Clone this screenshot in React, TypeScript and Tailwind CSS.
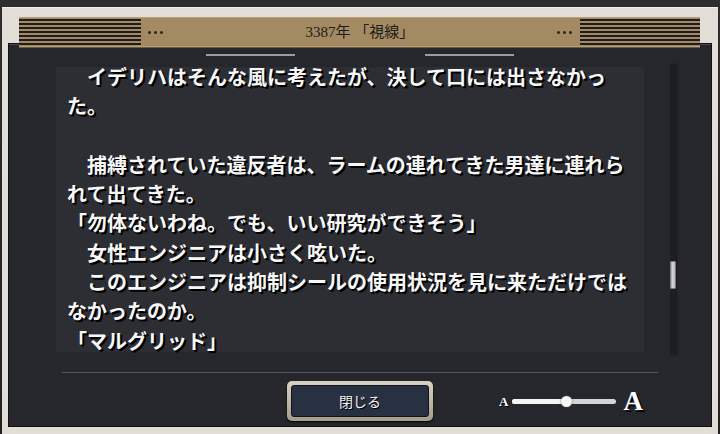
import React from 'react';

const bodyLines = [
  '　イデリハはそんな風に考えたが、決して口には出さなかっ',
  'た。',
  '',
  '　捕縛されていた違反者は、ラームの連れてきた男達に連れら',
  'れて出てきた。',
  '「勿体ないわね。でも、いい研究ができそう」',
  '　女性エンジニアは小さく呟いた。',
  '　このエンジニアは抑制シールの使用状況を見に来ただけでは',
  'なかったのか。',
  '「マルグリッド」',
];

const Dots = () => (
  <div className="flex items-center gap-[3px]">
    <span className="w-[3px] h-[3px] rounded-full bg-[#2a2620]" />
    <span className="w-[3px] h-[3px] rounded-full bg-[#2a2620]" />
    <span className="w-[3px] h-[3px] rounded-full bg-[#2a2620]" />
  </div>
);

const Stripes = ({ w }: { w: string }) => (
  <div
    className={`${w} h-full bg-[repeating-linear-gradient(to_bottom,#a38a62_0_1px,#1d1d21_1px_3px,#a38a62_3px_4px)]`}
  />
);

export default function App() {
  return (
    <div className="w-[720px] h-[434px] bg-[linear-gradient(to_bottom,#2e2e31,#222225)] px-[2px] pt-[7px] overflow-hidden">
      <div className="h-[427px] bg-[#e3ddd7] border-t border-[#f3efea] flex flex-col pt-[9px] px-[6px]">
        {/* header band */}
        <div className="relative z-10 mx-[11px] mr-[12px] h-[30px] bg-[#a38a62] border-y border-[#b89f74] flex items-center shadow-[0_1px_0_#6b5a3e]">
          <Stripes w="w-[122px]" />
          <div className="ml-[7px]">
            <Dots />
          </div>
          <div className="flex-1 text-center text-[15px] leading-none text-[#1e1c19] font-['Liberation_Serif','Noto_Sans_CJK_JP',serif]">
            3387年 「視線」
          </div>
          <div className="mr-[8px]">
            <Dots />
          </div>
          <Stripes w="w-[120px]" />
        </div>

        {/* dark panel */}
        <div className="-mt-[4px] h-[384px] bg-[#26272c] border border-[#111114] shadow-[inset_0_1px_0_#4a4a4e] flex flex-col">
          <div className="mt-[10px] flex justify-center gap-[130px]">
            <div className="w-[89px] h-[2px] bg-[#9c9c9e]" />
            <div className="w-[89px] h-[2px] bg-[#9c9c9e]" />
          </div>

          <div className="mt-[8px] h-[291px] flex pl-[47px]">
            <div className="mt-[3px] w-[588px] h-[285px] bg-[#2d2e33] pl-[11px]">
              <div className="-mt-[5px] text-[20px] leading-[29.3px] font-bold text-[#f7f7f7] whitespace-nowrap font-['Noto_Sans_CJK_JP',sans-serif] [text-shadow:2px_2px_0_#000,1px_1px_1px_#000]">
                {bodyLines.map((l, i) => (
                  <div key={i} className="h-[29.3px]">
                    {l}
                  </div>
                ))}
              </div>
            </div>
            <div className="ml-[26px] w-[6px] h-[291px] bg-[#1d1e22] shadow-[1px_0_2px_#18181b] flex flex-col">
              <div className="mt-[197px] h-[28px] w-[6px] rounded-[1px] bg-[linear-gradient(to_right,#9a9a9c,#d6d6d8_40%,#b8b8ba)] border border-[#7c7c80]" />
            </div>
          </div>

          <div className="mt-[17px] ml-[53px] w-[596px] h-[1px] bg-[#55565b]" />

          <div className="mt-[8px] flex items-center pl-[278px]">
            <div className="w-[146px] h-[40px] rounded-[5px] p-[4px] bg-[linear-gradient(to_bottom,#d8d2c4,#a49d8c)] shadow-[0_1px_2px_#000]">
              <div className="h-full rounded-[3px] border border-[#121419] bg-[#283142] flex items-center justify-center text-[14px] text-[#f4f4f4] font-['Noto_Sans_CJK_JP',serif] [text-shadow:1px_1px_0_#000]">
                閉じる
              </div>
            </div>
            <div className="ml-[66px] flex items-center">
              <span className="text-[13px] leading-none font-bold text-white font-['Liberation_Serif',serif] [text-shadow:1px_1px_0_#000]">
                A
              </span>
              <div className="ml-[4px] w-[104px] h-[5px] rounded-full bg-[#d4d4d6] flex items-center">
                <div className="w-[50px] h-[5px] rounded-l-full bg-[#f4f4f4]" />
                <div className="w-[11px] h-[11px] -ml-[1px] rounded-full bg-[#f6f6f6] shadow-[0_0_2px_#555]" />
              </div>
              <span className="ml-[7px] text-[27px] leading-none font-bold text-white font-['Liberation_Serif',serif] [text-shadow:2px_2px_0_#000]">
                A
              </span>
            </div>
          </div>
        </div>
      </div>
    </div>
  );
}
